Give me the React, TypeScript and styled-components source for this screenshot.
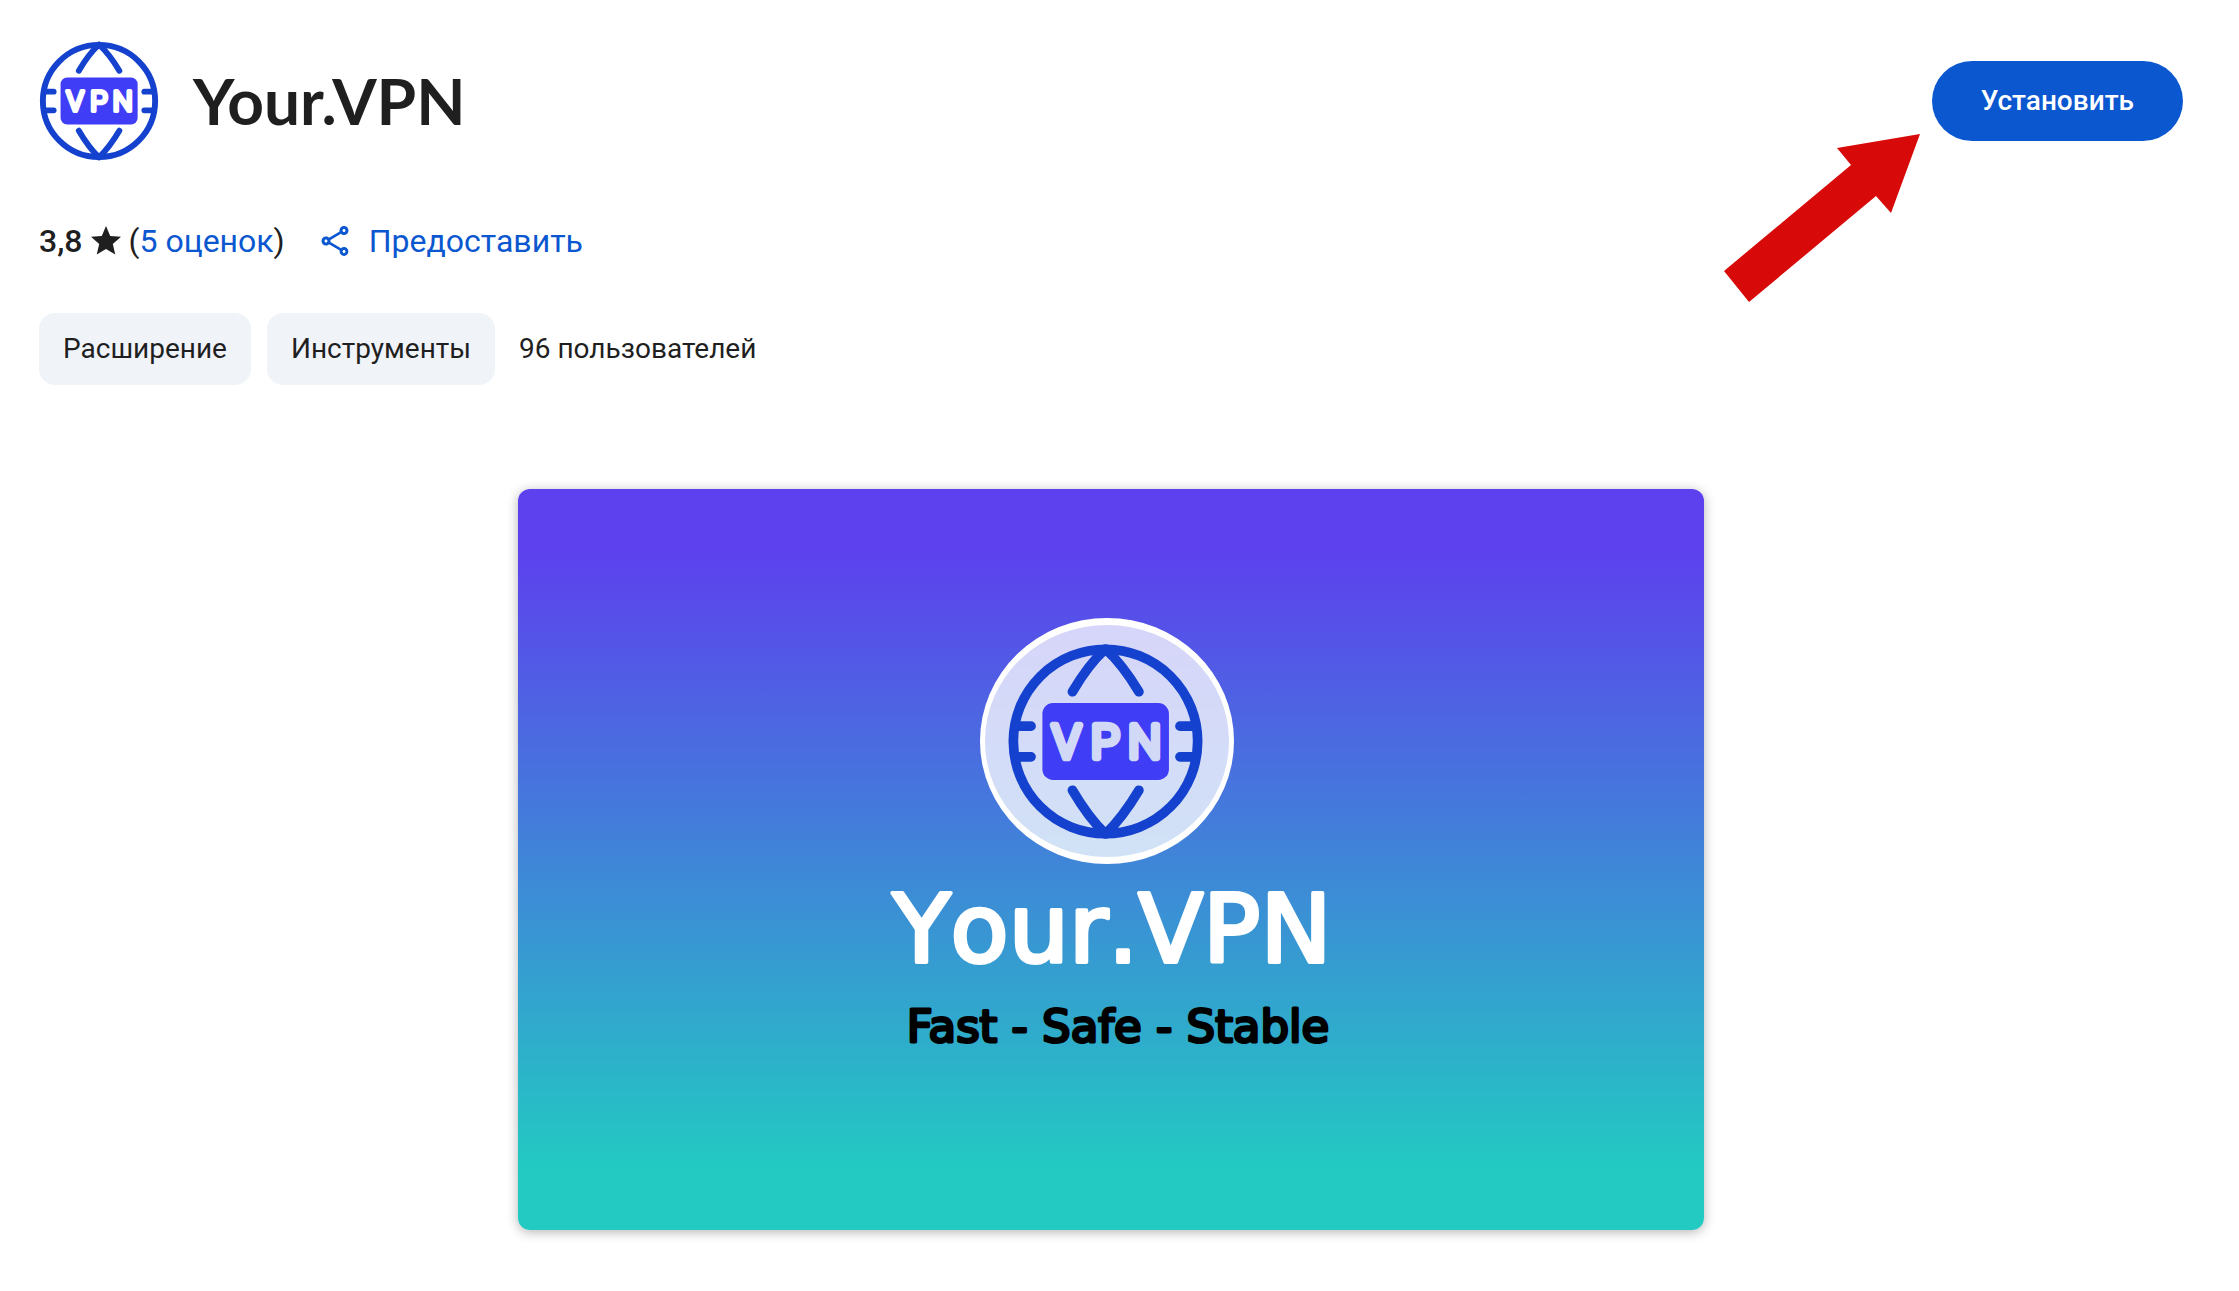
import React from "react";
import styled, { createGlobalStyle } from "styled-components";
import { MdOutlineShare, MdStar } from "react-icons/md";

const GlobalStyle = createGlobalStyle`
  *, *::before, *::after { box-sizing: border-box; }
  body {
    margin: 0;
    background: #ffffff;
    color: #1f1f1f;
    font-family: Roboto, "Noto Sans", sans-serif;
  }
`;

const Page = styled.main`
  padding: 41px 56px 60px 39px;
`;

const Header = styled.header`
  position: relative;
  display: flex;
  align-items: center;
  justify-content: space-between;
`;

const Brand = styled.div`
  display: flex;
  align-items: center;
  gap: 34px;
`;

const Title = styled.h1`
  margin: 0;
  font-family: Lato, Roboto, sans-serif;
  font-size: 64px;
  line-height: 80px;
  font-weight: 700;
`;

const InstallButton = styled.button`
  height: 80px;
  padding: 0 49px;
  border: 0;
  border-radius: 40px;
  background: #0b57d0;
  color: #ffffff;
  font: 500 28px/40px Roboto, "Noto Sans", sans-serif;
  cursor: pointer;
`;

const Pointer = styled.svg`
  position: absolute;
  top: 91px;
  right: 262px;
  width: 200px;
  height: 172px;
`;

const MetaRow = styled.div`
  display: flex;
  align-items: center;
  gap: 32px;
  margin-top: 60px;
  font-size: 32px;
  line-height: 40px;
`;

const Rating = styled.div`
  display: flex;
  align-items: center;
  gap: 5px;
`;

const Score = styled.span`
  font-weight: 500;
`;

const TextLink = styled.a`
  color: #0b57d0;
  text-decoration: none;
`;

const ShareButton = styled.button`
  display: flex;
  align-items: center;
  gap: 16px;
  padding: 0;
  border: 0;
  background: none;
  color: #0b57d0;
  font: inherit;
  cursor: pointer;
`;

const TagRow = styled.div`
  display: flex;
  align-items: center;
  gap: 16px;
  margin-top: 52px;
  font-size: 28px;
  line-height: 40px;
`;

const Tag = styled.a`
  padding: 16px 24px;
  border-radius: 16px;
  background: #f0f4f9;
  color: inherit;
  text-decoration: none;
`;

const Users = styled.span`
  padding: 0 8px;
`;

const Slide = styled.figure`
  max-width: 1186px;
  margin: 104px auto 0;
  border-radius: 12px;
  background: linear-gradient(#5d40ee 8%, #22cac2 92%);
  box-shadow: 0 2px 12px rgba(0, 0, 0, 0.3);
`;

const Artwork = styled.svg`
  display: block;
  width: 100%;
  height: auto;
`;

const Wordmark = styled.text`
  font-size: 95px;
  font-kerning: none;
  fill: #ffffff;
  stroke: #ffffff;
  stroke-width: 4px;
`;

const Slogan = styled.text`
  font-size: 45px;
  fill: #000000;
  stroke: #000000;
  stroke-width: 3px;
`;

interface GlobeLogoProps {
  size: number;
  lettering: string;
  x?: number;
  y?: number;
}

function GlobeLogo({ size, lettering, x, y }: GlobeLogoProps) {
  return (
    <svg x={x} y={y} width={size} height={size} viewBox="-4 -4 590 590" role="img" aria-label="VPN">
      <g fill="none" stroke="#1442cf" strokeWidth="29" strokeLinecap="round">
        <circle cx="291" cy="291" r="276" />
        <path d="M291 14Q240 60 192 142M291 14Q342 60 391 142" />
        <path d="M291 568Q240 519 192 437M291 568Q342 519 391 437" />
        <path d="M20 245H68M20 337H68M514 245H562M514 337H562" />
      </g>
      <rect x="102" y="176" width="379" height="230" rx="32" fill="#3f3df5" />
      <text
        x="174 290 408"
        y="341"
        textAnchor="middle"
        fontFamily="Roboto, sans-serif"
        fontWeight="300"
        fontSize="138"
        fill={lettering}
        stroke={lettering}
        strokeWidth="20"
        strokeLinejoin="round"
      >
        VPN
      </text>
    </svg>
  );
}

function SlideArtwork() {
  return (
    <Artwork viewBox="0 0 1186 741">
      <ellipse cx="589" cy="252" rx="124" ry="119" fill="#ffffff" fillOpacity="0.76" />
      <path
        fill="#ffffff"
        fillRule="evenodd"
        d="M462 252A127 123 0 1 1 716 252A127 123 0 1 1 462 252ZM467 252A122 116 0 1 0 711 252A122 116 0 1 0 467 252Z"
      />
      <GlobeLogo x={489} y={154} size={197} lettering="#d2d9f7" />
      <g fontFamily="DejaVu Sans, Verdana, sans-serif" textAnchor="middle" strokeLinejoin="round">
        <Wordmark x="594" y="473">
          Your.VPN
        </Wordmark>
        <Slogan x="600" y="553">
          Fast - Safe - Stable
        </Slogan>
      </g>
    </Artwork>
  );
}

export default function App() {
  return (
    <>
      <GlobalStyle />
      <Page>
        <Header>
          <Brand>
            <GlobeLogo size={120} lettering="#ffffff" />
            <Title>Your.VPN</Title>
          </Brand>
          <InstallButton type="button">Установить</InstallButton>
          <Pointer viewBox="0 0 200 172" aria-hidden="true">
            <path d="M199 2L116 16L130 33L3 139L28 170L155 64L170 81Z" fill="#d70909" />
          </Pointer>
        </Header>

        <MetaRow>
          <Rating>
            <Score>3,8</Score>
            <MdStar size={36} aria-hidden="true" />
            <span>
              (<TextLink href="#reviews">5 оценок</TextLink>)
            </span>
          </Rating>
          <ShareButton type="button">
            <MdOutlineShare size={36} aria-hidden="true" />
            Предоставить
          </ShareButton>
        </MetaRow>

        <TagRow>
          <Tag href="#extensions">Расширение</Tag>
          <Tag href="#tools">Инструменты</Tag>
          <Users>96 пользователей</Users>
        </TagRow>

        <Slide>
          <SlideArtwork />
        </Slide>
      </Page>
    </>
  );
}
